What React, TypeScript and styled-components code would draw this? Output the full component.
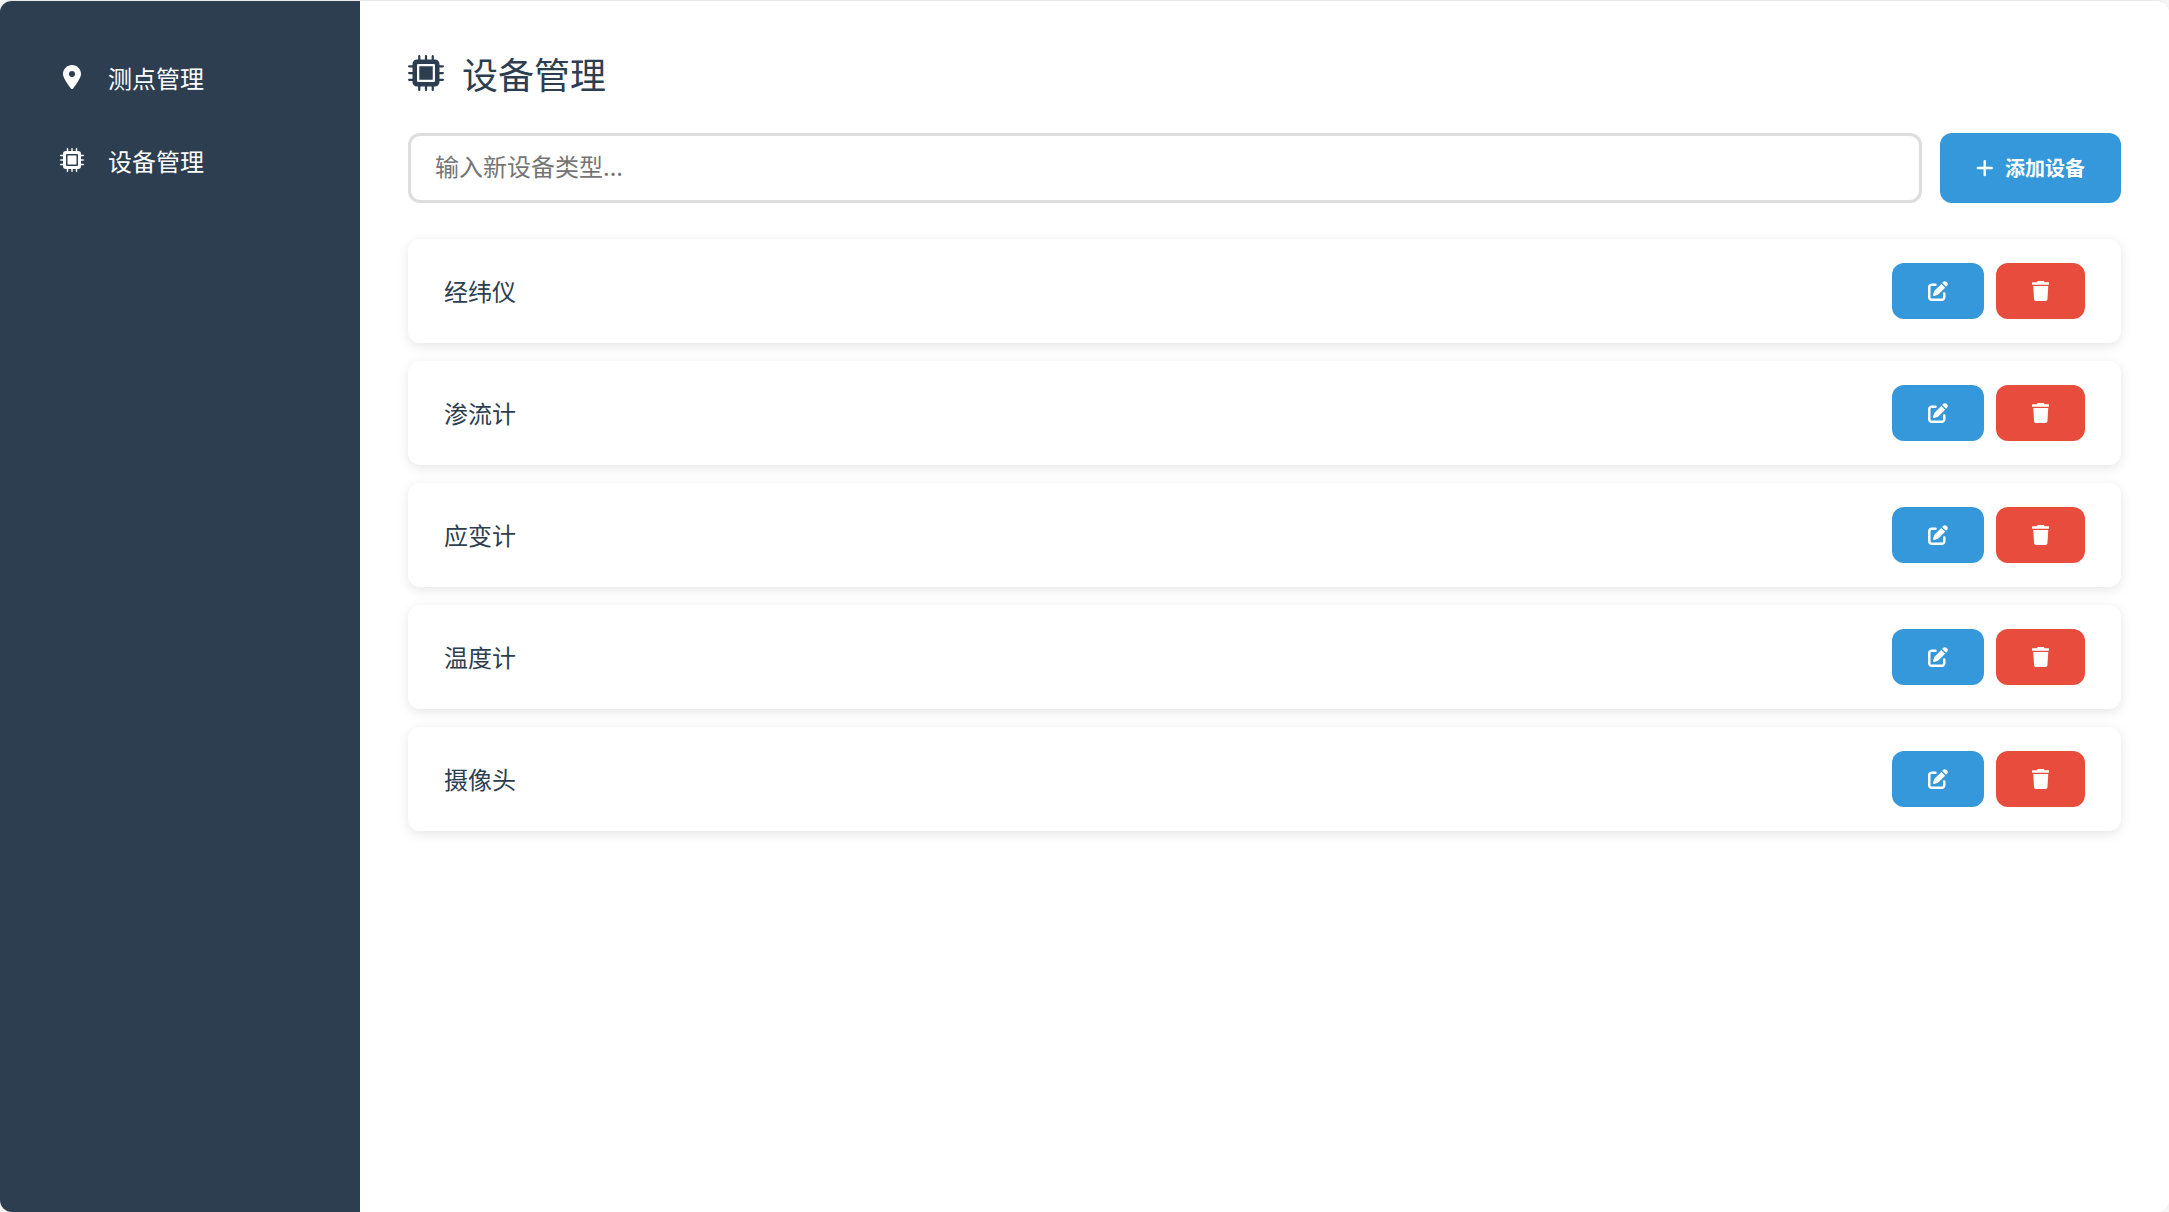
import React, { useState } from "react";
import styled, { createGlobalStyle } from "styled-components";
import { FaLocationDot, FaPenToSquare } from "react-icons/fa6";

const GlobalStyle = createGlobalStyle`
  *, *::before, *::after { box-sizing: border-box; }
  body {
    margin: 0;
    background: #f5f5f5;
    color: #2c3e50;
    font-family: "Noto Sans CJK SC", sans-serif;
    font-size: 24px;
    line-height: 36px;
  }
  button, input { font-family: inherit; }
  svg { flex: none; width: auto; height: 1em; fill: currentColor; }
`;

const Shell = styled.div`
  display: flex;
  min-height: 100vh;
  border-top: 1px solid #e8e8e8;
  border-radius: 12px;
  overflow: hidden;
  background: #fff;
`;

const Sidebar = styled.nav`
  flex: 0 0 360px;
  padding: 42px 30px;
  display: flex;
  flex-direction: column;
  gap: 12px;
  background: #2c3e50;
`;

const NavLink = styled.a`
  display: flex;
  align-items: center;
  gap: 18px;
  padding: 17px 24px 18px;
  border-radius: 12px;
  color: #fff;
  text-decoration: none;
`;

const NavIcon = styled.span`
  display: flex;
  justify-content: center;
  width: 36px;
  padding-bottom: 2px;
`;

const Main = styled.main`
  flex: 1;
  min-width: 0;
  padding: 48px;
`;

const Title = styled.h1`
  display: flex;
  align-items: center;
  gap: 18px;
  margin: 0 0 36px;
  font-size: 36px;
  font-weight: 400;
  line-height: 48px;
`;

const AddForm = styled.form`
  display: flex;
  gap: 18px;
  margin-bottom: 36px;
`;

const TypeInput = styled.input`
  flex: 1;
  min-width: 0;
  height: 70px;
  padding: 0 24px 6px;
  border: 3px solid #ddd;
  border-radius: 12px;
  background: #fff;
  color: #2c3e50;
  font-size: 24px;
  &::placeholder { color: #757575; }
`;

const Button = styled.button<{ $danger?: boolean }>`
  display: inline-flex;
  align-items: center;
  justify-content: center;
  gap: 12px;
  padding: 18px 36px;
  border: 0;
  border-radius: 12px;
  background: ${(p) => (p.$danger ? "#e74c3c" : "#3498db")};
  color: #fff;
  font-size: 20px;
  font-weight: 700;
  line-height: 20px;
  cursor: pointer;
`;

const List = styled.ul`
  display: flex;
  flex-direction: column;
  gap: 18px;
  margin: 0;
  padding: 0;
  list-style: none;
`;

const Row = styled.li`
  display: flex;
  align-items: center;
  justify-content: space-between;
  padding: 24px 36px;
  border-radius: 12px;
  background: #fff;
  box-shadow: 0 3px 12px rgba(0, 0, 0, 0.1);
`;

const Actions = styled.div`
  display: flex;
  gap: 12px;
`;

const pins = [160, 256, 352];

function ChipIcon() {
  return (
    <svg viewBox="0 0 512 512" aria-hidden="true">
      <path
        fillRule="evenodd"
        d="M128 64H384a64 64 0 0 1 64 64V384a64 64 0 0 1-64 64H128a64 64 0 0 1-64-64V128a64 64 0 0 1 64-64zM144 128a16 16 0 0 0-16 16V368a16 16 0 0 0 16 16H368a16 16 0 0 0 16-16V144a16 16 0 0 0-16-16zM160 160H352V352H160z"
      />
      {pins.map((at) => (
        <path
          key={at}
          d={`M${at - 16} 80V16a16 16 0 0 1 32 0V80zM${at - 16} 432V496a16 16 0 0 0 32 0V432zM80 ${at - 16}H16a16 16 0 0 0 0 32H80zM432 ${at - 16}H496a16 16 0 0 1 0 32H432z`}
        />
      ))}
    </svg>
  );
}

function PlusIcon() {
  return (
    <svg viewBox="0 0 448 512" aria-hidden="true">
      <path d="M432 256a32 32 0 0 1-32 32H256V432a32 32 0 0 1-64 0V288H48a32 32 0 0 1 0-64H192V80a32 32 0 0 1 64 0V224H400a32 32 0 0 1 32 32z" />
    </svg>
  );
}

function TrashIcon() {
  return (
    <svg viewBox="0 0 448 512" aria-hidden="true">
      <path d="M432 32H320l-11.6-23.2C305.7 3.4 300.2 0 294.1 0H153.9c-6.1 0-11.6 3.4-14.3 8.8L128 32H16C7.2 32 0 39.2 0 48v32c0 8.800 7.200 16 16 16h416c8.800 0 16-7.200 16-16V48c0-8.800-7.200-16-16-16zM32 128l21.200 339c1.600 25.300 22.600 45 47.900 45h245.800c25.300 0 46.300-19.700 47.900-45L416 128z" />
    </svg>
  );
}

const initialDevices = ["经纬仪", "渗流计", "应变计", "温度计", "摄像头"];

export default function App() {
  const [devices, setDevices] = useState(initialDevices);
  const [draft, setDraft] = useState("");

  const addDevice = (event: React.FormEvent) => {
    event.preventDefault();
    const name = draft.trim();
    if (!name) return;
    setDevices([...devices, name]);
    setDraft("");
  };

  return (
    <>
      <GlobalStyle />
      <Shell>
        <Sidebar>
          <NavLink href="#points">
            <NavIcon><FaLocationDot aria-hidden /></NavIcon>
            测点管理
          </NavLink>
          <NavLink href="#devices">
            <NavIcon><ChipIcon /></NavIcon>
            设备管理
          </NavLink>
        </Sidebar>
        <Main>
          <Title><ChipIcon />设备管理</Title>
          <AddForm onSubmit={addDevice}>
            <TypeInput
              aria-label="设备类型"
              placeholder="输入新设备类型..."
              value={draft}
              onChange={(e) => setDraft(e.target.value)}
            />
            <Button type="submit"><PlusIcon />添加设备</Button>
          </AddForm>
          <List>
            {devices.map((name) => (
              <Row key={name}>
                <span>{name}</span>
                <Actions>
                  <Button type="button" aria-label={`编辑${name}`}><FaPenToSquare aria-hidden /></Button>
                  <Button
                    type="button"
                    $danger
                    aria-label={`删除${name}`}
                    onClick={() => setDevices(devices.filter((d) => d !== name))}
                  >
                    <TrashIcon />
                  </Button>
                </Actions>
              </Row>
            ))}
          </List>
        </Main>
      </Shell>
    </>
  );
}
